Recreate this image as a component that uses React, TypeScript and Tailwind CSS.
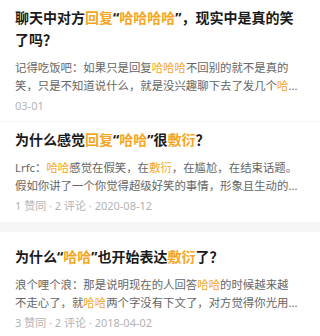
import React from 'react';

type Seg = string | { hl: string };

type Item = {
  title: Seg[];
  body: Seg[];
  meta: string;
  pad: string;
};

const items: Item[] = [
  {
    title: ['聊天中对方', { hl: '回复' }, '“', { hl: '哈哈哈哈' }, '”，现实中是真的笑了吗？'],
    body: ['记得吃饭吧：如果只是回复', { hl: '哈哈哈' }, '不回别的就不是真的笑，只是不知道说什么，就是没兴趣聊下去了发几个', { hl: '哈哈' }, '，或者就是聊天的时候随便发发'],
    meta: '03-01',
    pad: 'pt-[7px] pb-[7px]',
  },
  {
    title: ['为什么感觉', { hl: '回复' }, '“', { hl: '哈哈' }, '”很', { hl: '敷衍' }, '？'],
    body: ['Lrfc：', { hl: '哈哈' }, '感觉在假笑，在', { hl: '敷衍' }, '，在尴尬，在结束话题。假如你讲了一个你觉得超级好笑的事情，形象且生动的描述了出来'],
    meta: '1 赞同 · 2 评论 · 2020-08-12',
    pad: 'pt-[7px] pb-[8px]',
  },
  {
    title: ['为什么“', { hl: '哈哈' }, '”也开始表达', { hl: '敷衍' }, '了？'],
    body: ['浪个哩个浪：那是说明现在的人回答', { hl: '哈哈' }, '的时候越来越不走心了，就', { hl: '哈哈' }, '两个字没有下文了，对方觉得你光用这两个字回复'],
    meta: '3 赞同 · 2 评论 · 2018-04-02',
    pad: 'pt-[14px] pb-[11px]',
  },
];

function Text({ segs }: { segs: Seg[] }) {
  return (
    <>
      {segs.map((s, i) =>
        typeof s === 'string' ? (
          <span key={i}>{s}</span>
        ) : (
          <span key={i} className="text-[#f5a623]">
            {s.hl}
          </span>
        )
      )}
    </>
  );
}

function Card({ item }: { item: Item }) {
  return (
    <div className={`pl-[15px] pr-[21px] ${item.pad}`}>
      <h3 className="text-[14px] leading-[22px] font-bold text-[#1a1a1a]">
        <Text segs={item.title} />
      </h3>
      <p className="mt-[8px] text-[11.4px] leading-[18px] text-[#666666] line-clamp-2">
        <Text segs={item.body} />
      </p>
      <div className="mt-[3px] text-[11px] leading-[16px] text-[#b3b3b3]">{item.meta}</div>
    </div>
  );
}

export default function App() {
  return (
    <div
      lang="zh-CN"
      className="w-[320px] h-[336px] overflow-hidden bg-white"
      style={{ fontFamily: '"Noto Sans", "Noto Sans CJK SC", sans-serif' }}
    >
      <Card item={items[0]} />
      <div className="h-px bg-[#f4f4f4]" />
      <Card item={items[1]} />
      <div className="h-[10px] bg-[#f5f5f5]" />
      <Card item={items[2]} />
    </div>
  );
}
